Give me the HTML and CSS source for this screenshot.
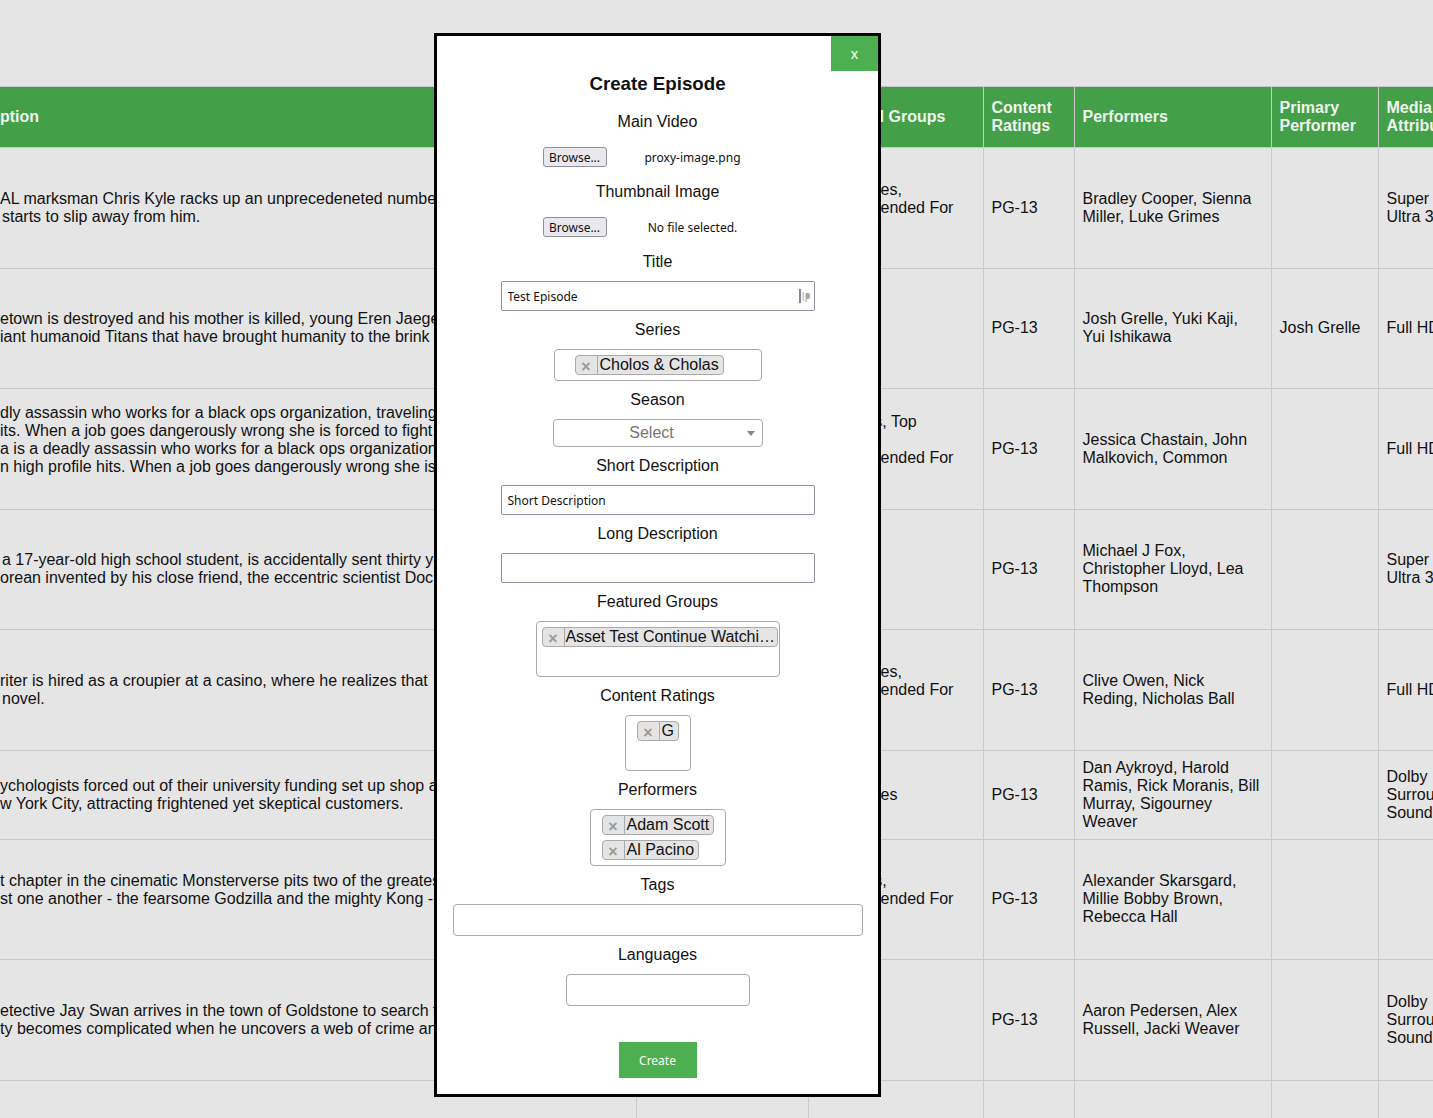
FILE: index.html
```html
<!DOCTYPE html>
<html lang="en">
<head>
<meta charset="utf-8">
<title>Episodes</title>
<link rel="stylesheet" href="styles.css">
</head>
<body>
<div class="page">
  <table class="grid">
    <colgroup>
      <col class="c-desc"><col class="c-poster"><col class="c-groups"><col class="c-rating"><col class="c-perf"><col class="c-primary"><col class="c-media">
    </colgroup>
    <thead>
      <tr>
        <th class="desc-h">Description</th>
        <th>Poster</th>
        <th>Featured Groups</th>
        <th>Content Ratings</th>
        <th>Performers</th>
        <th>Primary Performer</th>
        <th>Media Attributes</th>
      </tr>
    </thead>
    <tbody>
      <tr>
        <td class="desc"><div class="line">AL marksman Chris Kyle racks up an unprecedeneted number of kills</div><div class="line line-sp">starts to slip away from him.</div></td>
        <td><div class="poster"></div></td>
        <td>Top Movies, Recommended For You</td>
        <td>PG-13</td>
        <td>Bradley Cooper, Sienna Miller, Luke Grimes</td>
        <td></td>
        <td>Super Ultra 3D</td>
      </tr>
      <tr>
        <td class="desc"><div class="line">etown is destroyed and his mother is killed, young Eren Jaeger vows</div><div class="line">iant humanoid Titans that have brought humanity to the brink of</div></td>
        <td><div class="poster"></div></td>
        <td></td>
        <td>PG-13</td>
        <td>Josh Grelle, Yuki Kaji, Yui Ishikawa</td>
        <td>Josh Grelle</td>
        <td>Full HD</td>
      </tr>
      <tr>
        <td class="desc"><div class="line">dly assassin who works for a black ops organization, traveling the</div><div class="line">its. When a job goes dangerously wrong she is forced to fight for</div><div class="line">a is a deadly assassin who works for a black ops organization,</div><div class="line">n high profile hits. When a job goes dangerously wrong she is forced</div><div class="line">&nbsp;</div></td>
        <td><div class="poster"></div></td>
        <td>Favorites, Top Movies, Recommended For You</td>
        <td>PG-13</td>
        <td>Jessica Chastain, John Malkovich, Common</td>
        <td></td>
        <td>Full HD</td>
      </tr>
      <tr>
        <td class="desc"><div class="line line-sp">a 17-year-old high school student, is accidentally sent thirty years</div><div class="line">orean invented by his close friend, the eccentric scientist Doc Brown.</div></td>
        <td><div class="poster"></div></td>
        <td></td>
        <td>PG-13</td>
        <td>Michael J Fox, Christopher Lloyd, Lea Thompson</td>
        <td></td>
        <td>Super Ultra 3D</td>
      </tr>
      <tr>
        <td class="desc"><div class="line">riter is hired as a croupier at a casino, where he realizes that</div><div class="line line-sp">novel.</div></td>
        <td><div class="poster"></div></td>
        <td>Top Movies, Recommended For You</td>
        <td>PG-13</td>
        <td>Clive Owen, Nick Reding, Nicholas Ball</td>
        <td></td>
        <td>Full HD</td>
      </tr>
      <tr>
        <td class="desc"><div class="line">ychologists forced out of their university funding set up shop as</div><div class="line">w York City, attracting frightened yet skeptical customers.</div></td>
        <td></td>
        <td>Top Movies</td>
        <td>PG-13</td>
        <td>Dan Aykroyd, Harold Ramis, Rick Moranis, Bill Murray, Sigourney Weaver</td>
        <td></td>
        <td>Dolby Surround Sound</td>
      </tr>
      <tr>
        <td class="desc"><div class="line">t chapter in the cinematic Monsterverse pits two of the greatest icons</div><div class="line">st one another - the fearsome Godzilla and the mighty Kong -</div><div class="line">&nbsp;</div></td>
        <td><div class="poster"></div></td>
        <td>Favorites, Recommended For You</td>
        <td>PG-13</td>
        <td>Alexander Skarsgard, Millie Bobby Brown, Rebecca Hall</td>
        <td></td>
        <td></td>
      </tr>
      <tr>
        <td class="desc"><div class="line">etective Jay Swan arrives in the town of Goldstone to search for</div><div class="line">ty becomes complicated when he uncovers a web of crime and</div></td>
        <td><div class="poster"></div></td>
        <td></td>
        <td>PG-13</td>
        <td>Aaron Pedersen, Alex Russell, Jacki Weaver</td>
        <td></td>
        <td>Dolby Surround Sound</td>
      </tr>
      <tr>
        <td class="desc"></td>
        <td><div class="poster"></div></td>
        <td></td>
        <td></td>
        <td></td>
        <td></td>
        <td></td>
      </tr>
    </tbody>
  </table>
</div>

<div class="modal">
  <button class="close" type="button">x</button>
  <h3 class="modal-title">Create Episode</h3>

  <div class="label">Main Video</div>
  <div class="file-row"><button class="browse" type="button">Browse...</button><span class="file-name">proxy-image.png</span></div>

  <div class="label">Thumbnail Image</div>
  <div class="file-row"><button class="browse" type="button">Browse...</button><span class="file-name">No file selected.</span></div>

  <div class="label">Title</div>
  <div class="field-wrap">
    <input class="text-input" type="text" value="Test Episode">
    <svg class="pw-icon" width="12" height="16" viewBox="0 0 12 16" aria-hidden="true">
      <rect x="0" y="1" width="2" height="14" fill="#8a8a8a"/>
      <rect x="3.5" y="4" width="1.5" height="9" fill="#c4c4c4"/>
      <path d="M6.5 5h2.5a2 2 0 0 1 2 2v2a2 2 0 0 1-2 2H6.5z" fill="#a8a8a8"/>
      <rect x="6.5" y="11" width="1.5" height="3" fill="#b8b8b8"/>
    </svg>
  </div>

  <div class="label">Series</div>
  <div class="multi multi--series">
    <span class="chip"><span class="chip-x">×</span><span class="chip-label">Cholos &amp; Cholas</span></span>
  </div>

  <div class="label">Season</div>
  <div class="select">Select<span class="select-arrow"></span></div>

  <div class="label">Short Description</div>
  <input class="text-input" type="text" value="Short Description">

  <div class="label">Long Description</div>
  <input class="text-input" type="text" value="">

  <div class="label">Featured Groups</div>
  <div class="multi multi--groups">
    <span class="chip"><span class="chip-x">×</span><span class="chip-label chip-label--clip">Asset Test Continue Watching Group</span></span>
  </div>

  <div class="label">Content Ratings</div>
  <div class="multi multi--ratings">
    <span class="chip"><span class="chip-x">×</span><span class="chip-label">G</span></span>
  </div>

  <div class="label">Performers</div>
  <div class="multi multi--perf">
    <span class="chip"><span class="chip-x">×</span><span class="chip-label">Adam Scott</span></span>
    <span class="chip"><span class="chip-x">×</span><span class="chip-label">Al Pacino</span></span>
  </div>

  <div class="label">Tags</div>
  <div class="box-input box-input--tags"></div>

  <div class="label">Languages</div>
  <div class="box-input box-input--lang"></div>

  <button class="create" type="button">Create</button>
</div>
</body>
</html>
```

FILE: styles.css
```css
* { box-sizing: border-box; }

html, body {
  margin: 0;
  height: 100%;
  overflow: hidden;
}

body {
  background: #e5e5e5;
  font-family: "Liberation Sans", Arial, sans-serif;
  font-size: 16px;
  color: #111;
}

.page {
  padding-top: 86px;
}

/* ---------- table ---------- */
.grid {
  border-collapse: collapse;
  table-layout: fixed;
  width: 1471px;
}

.c-desc { width: 636px; }
.c-poster { width: 172px; }
.c-groups { width: 175px; }
.c-rating { width: 91px; }
.c-perf { width: 197px; }
.c-primary { width: 107px; }
.c-media { width: 93px; }

.grid th,
.grid td {
  border: 1px solid #c8c8c8;
  text-align: left;
  vertical-align: middle;
  padding: 8px;
  overflow: hidden;
}

.grid th {
  background: #449f49;
  color: #eef5ee;
  font-weight: bold;
  height: 61px;
  padding-top: 0;
  padding-bottom: 0;
}

.grid th:first-child,
.grid td:first-child {
  border-left: none;
  padding-left: 0;
}

.desc-h {
  text-indent: -49px;
  white-space: nowrap;
}

.line {
  white-space: nowrap;
  overflow: hidden;
}

.line-sp {
  padding-left: 2px;
}

.poster {
  height: 103.5px;
}

/* ---------- modal ---------- */
.modal {
  position: absolute;
  left: 434px;
  top: 33px;
  width: 447px;
  height: 1064px;
  background: #fff;
  border: 3px solid #000;
  display: flex;
  flex-direction: column;
  align-items: center;
  text-align: center;
}

.close {
  position: absolute;
  top: 0;
  right: 0;
  width: 47px;
  height: 35px;
  border: none;
  padding: 0;
  background: #4caf50;
  color: #fff;
  font-family: "Noto Sans", sans-serif;
  font-size: 14px;
  line-height: 32px;
}

.modal-title {
  margin: 37px 0 8px;
  font-size: 18.72px;
  line-height: 22px;
  font-weight: bold;
  color: #111;
}

.label {
  margin: 10px 0 10px;
  line-height: 18px;
  color: #111;
}

.file-row {
  display: flex;
  width: 230px;
  height: 20px;
  margin: 6px 0;
  align-items: center;
  font-family: "Noto Sans", sans-serif;
  font-size: 12px;
}

.browse {
  width: 64px;
  height: 20px;
  padding: 0;
  border: 1px solid #8f8f9d;
  border-radius: 3px;
  background: #e9e9ed;
  color: #111;
  font-family: "Noto Sans", sans-serif;
  font-size: 12px;
  line-height: 17px;
}

.file-name {
  flex: 1;
  padding: 1px 0 0 6px;
  text-align: center;
  color: #111;
  line-height: 18px;
}

.field-wrap {
  position: relative;
}

.text-input {
  display: block;
  width: 314px;
  height: 30px;
  border: 1px solid #8f8f9d;
  border-radius: 2px;
  padding: 0 6px;
  font-family: "Noto Sans", sans-serif;
  font-size: 12px;
  color: #111;
  background: #fff;
  outline: none;
}

.pw-icon {
  position: absolute;
  right: 4px;
  top: 7px;
}

.multi {
  border: 1px solid #aaa;
  border-radius: 4px;
  text-align: left;
  padding-top: 5px;
}

.multi--series { width: 208px; height: 32px; padding-left: 20px; }
.multi--groups { width: 244px; height: 56px; padding-left: 5px; }
.multi--ratings { width: 66px; height: 56px; padding-left: 11px; }
.multi--perf { width: 136px; height: 57px; padding-left: 11px; }

.chip {
  display: inline-flex;
  height: 20px;
  border: 1px solid #aaa;
  border-radius: 4px;
  background: #e4e4e4;
  vertical-align: top;
}

.multi--perf .chip {
  display: flex;
  width: max-content;
  margin-bottom: 5px;
}

.chip-x {
  width: 22px;
  border-right: 1px solid #aaa;
  color: #999;
  font-weight: bold;
  font-size: 16px;
  line-height: 21px;
  text-align: center;
  overflow: hidden;
}

.chip-label {
  padding: 0 4px 0 2px;
  line-height: 18px;
  white-space: nowrap;
  color: #111;
}

.chip-label--clip {
  max-width: 212px;
  padding-left: 1px;
  padding-right: 0;
  overflow: hidden;
  text-overflow: ellipsis;
  letter-spacing: -0.05px;
}

.select {
  position: relative;
  width: 210px;
  height: 28px;
  border: 1px solid #aaa;
  border-radius: 4px;
  padding-right: 12px;
  line-height: 26px;
  color: #757575;
}

.select-arrow {
  position: absolute;
  right: 7px;
  top: 11px;
  width: 0;
  height: 0;
  border-style: solid;
  border-width: 5px 4px 0 4px;
  border-color: #888 transparent transparent transparent;
}

.box-input {
  height: 32px;
  border: 1px solid #aaa;
  border-radius: 4px;
}

.box-input--tags { width: 410px; }
.box-input--lang { width: 184px; }

.create {
  margin-top: 36px;
  width: 78px;
  height: 36px;
  border: none;
  padding: 0;
  background: #4caf50;
  color: #fff;
  font-family: "Noto Sans", sans-serif;
  font-size: 12px;
}
```
